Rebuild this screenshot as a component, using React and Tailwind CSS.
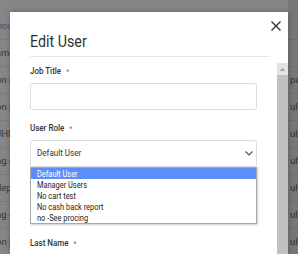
import React from "react";

// rows of the dimmed page behind the modal
const pageRows = [
  { left: "on [", right: "pany" },
  { left: "on [", right: "ult" },
  { left: "JHN", right: "ult" },
  { left: "ng g", right: "ult" },
  { left: "dep", right: "ult" },
  { left: "ng g", right: "ult" },
  { left: "on [", right: "ult" },
];

const roles = [
  "Default User",
  "Manager Users",
  "No cart test",
  "No cash back report",
  "no -See procing",
];

const Label = ({ children }) => (
  <div className="mb-[6px] h-[12px] whitespace-nowrap text-[9.5px] font-medium leading-[12px] text-[#333]">
    <span className="inline-block origin-left scale-x-[0.84]">
      {children}
      <span className="ml-[6px] text-[8px] text-[#d9534f]">*</span>
    </span>
  </div>
);

const App = () => {
  return (
    <div className="relative h-[254px] w-[298px] overflow-hidden bg-[#868686] font-['Roboto',sans-serif]">
      {/* Page behind the backdrop */}
      <div className="flex h-full text-[9.5px] text-[#373737]">
        <div className="flex-1">
          <div className="flex h-[40px] items-end border-b border-[#7b7b7b] pb-[6px]">
            <span className="-ml-[9px] leading-[14px] text-[#3c5876]">Show</span>
          </div>
          <div className="flex h-[27px] items-center border-b border-[#7b7b7b]">
            <span className="-ml-[11px]">Name</span>
          </div>
          {pageRows.map((row, i) => (
            <div
              key={i}
              className="flex h-[27px] items-center border-b border-[#7b7b7b]"
            >
              <span className="-ml-[4px]">{row.left}</span>
            </div>
          ))}
        </div>
        <div className="w-[10px] overflow-hidden bg-[#777777]">
          <div className="h-[40px] border-b border-[#6e6e6e]" />
          <div className="h-[27px] border-b border-[#6e6e6e]" />
          {pageRows.map((row, i) => (
            <div
              key={i}
              className="flex h-[27px] items-center whitespace-nowrap border-b border-[#6e6e6e] pl-[2px] text-[#2e2e2e]"
            >
              {row.right}
            </div>
          ))}
        </div>
      </div>

      {/* Modal */}
      <div className="absolute left-[10px] top-[12px] flex h-[242px] w-[278px] flex-col bg-white shadow-[0_0_6px_rgba(0,0,0,0.25)]">
        <div className="relative pl-[20px] pr-[18px] pt-[19px]">
          <h2 className="whitespace-nowrap text-[17px] leading-[20px] text-[#333]">
            <span className="inline-block origin-left scale-x-[0.84]">Edit User</span>
          </h2>
          <div className="mt-[5px] h-px bg-[#e6e6e6]" />
          <button className="absolute right-[7px] top-[9px] h-[10px] w-[10px]">
            <svg width="10" height="10" viewBox="0 0 10 10">
              <path
                d="M0.5 0.5L9.5 9.5M9.5 0.5L0.5 9.5"
                stroke="#333"
                strokeWidth="1.4"
              />
            </svg>
          </button>
        </div>

        <div className="mt-[6px] flex min-h-0 flex-1">
          <div className="flex flex-1 flex-col gap-[12px] px-[20px] pt-[2px]">
            <div>
              <Label>Job Title</Label>
              <div className="h-[27px] rounded-[2px] border border-[#dedede]" />
            </div>

            <div className="relative">
              <Label>User Role</Label>
              <div className="flex h-[27px] items-center justify-between rounded-[2px] border border-[#dedede] pl-[6px] pr-[3px] text-[9.5px] text-[#333]">
                <span className="inline-block origin-left scale-x-[0.85]">Default User</span>
                <svg width="8" height="5" viewBox="0 0 8 5">
                  <path
                    d="M0.5 0.5L4 4L7.5 0.5"
                    fill="none"
                    stroke="#555"
                    strokeWidth="1.2"
                  />
                </svg>
              </div>
              {/* open native list */}
              <ul className="absolute left-0 right-0 top-full z-10 border border-[#a9a9a9] bg-white shadow-[1px_1px_2px_rgba(0,0,0,0.2)]">
                {roles.map((role, i) => (
                  <li
                    key={role}
                    className={
                      i === 0
                        ? "h-[11px] whitespace-nowrap bg-[#5b8ef8] pl-[6px] text-[9.5px] leading-[11px] text-white"
                        : "h-[11px] whitespace-nowrap pl-[6px] text-[9.5px] leading-[11px] text-[#222]"
                    }
                  >
                    <span className="inline-block origin-left scale-x-[0.78]">{role}</span>
                  </li>
                ))}
              </ul>
            </div>

            <div>
              <Label>First Name</Label>
              <div className="h-[27px] rounded-[2px] border border-[#dedede]" />
            </div>

            <div className="pt-[1px]">
              <Label>Last Name</Label>
              <div className="h-[27px] rounded-[2px] border border-[#dedede]" />
            </div>
          </div>

          {/* scrollbar */}
          <div className="flex w-[11px] flex-col bg-[#c1c1c1]">
            <div className="flex h-[12px] items-center justify-center bg-[#e3e3e3]">
              <svg width="5" height="3" viewBox="0 0 5 3">
                <path d="M0 3L2.5 0L5 3Z" fill="#9a9a9a" />
              </svg>
            </div>
          </div>
        </div>
      </div>
    </div>
  );
};

export default App;
